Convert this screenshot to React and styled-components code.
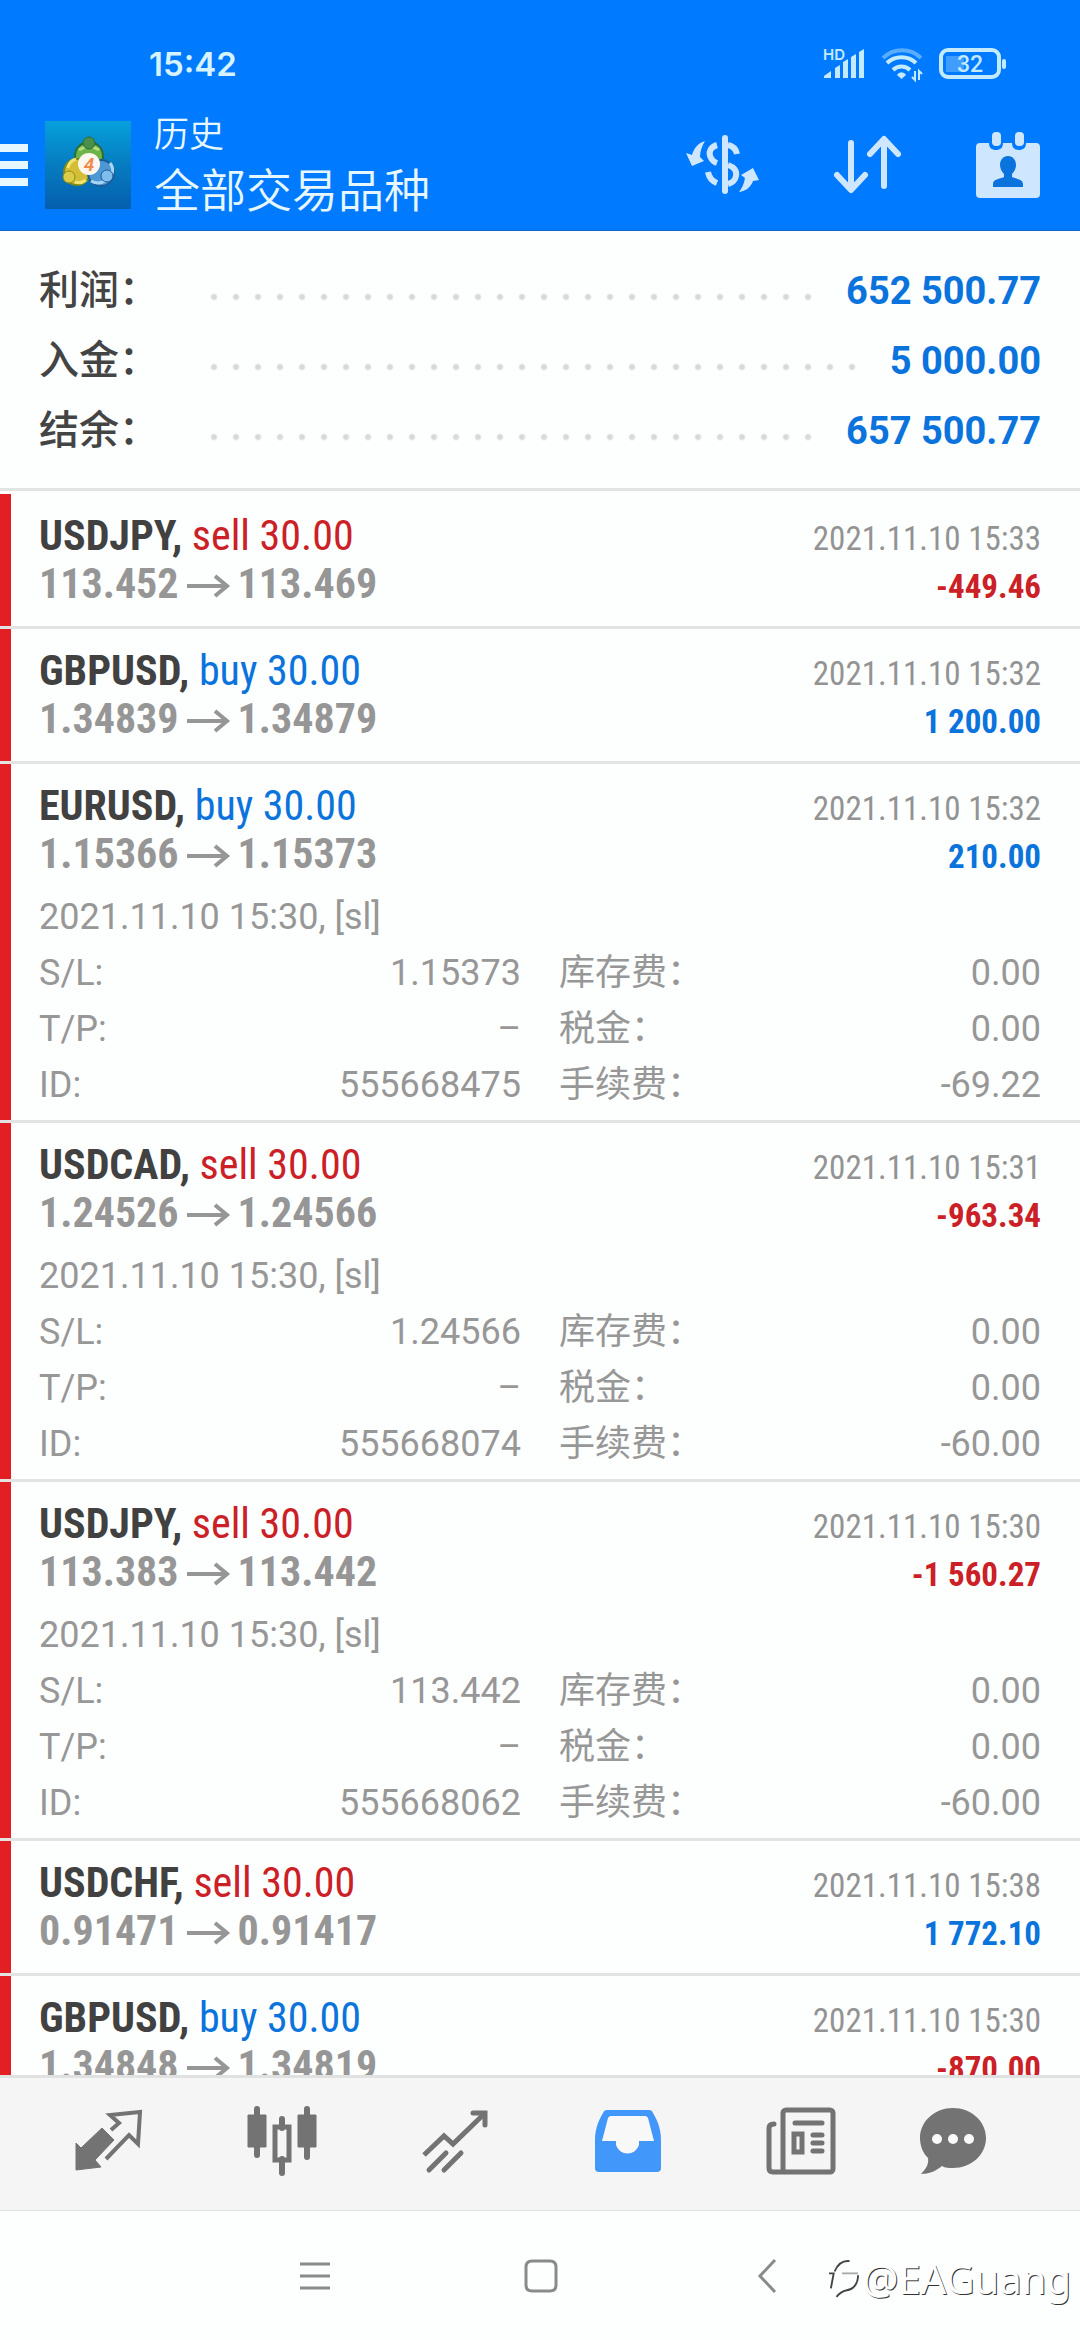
import React from "react";
import styled, { createGlobalStyle } from "styled-components";

const CJK = `"Noto Sans CJK SC", sans-serif`;
const BLUE = "#0a73dc";
const RED = "#cb2026";

const GlobalStyle = createGlobalStyle`
  * { box-sizing: border-box; }
  body { margin: 0; background: #fdfefe; font-family: Roboto, ${CJK}; }
  button { border: 0; padding: 0; background: none; font: inherit; color: inherit; }
  svg { display: block; overflow: visible; }
  h1, h2, p, dl, dt, dd, ul { margin: 0; padding: 0; font-weight: inherit; }
`;

const Screen = styled.div`
  position: relative;
  display: flex;
  flex-direction: column;
  height: 100vh;
  overflow: hidden;
`;

const TopArea = styled.header`
  flex: none;
  background: #007aff;
  border-bottom: 1px solid #1268c8;
  color: #e6f7ff;
`;

const StatusBar = styled.div`
  display: flex;
  align-items: center;
  justify-content: space-between;
  height: 86px;
  padding: 42px 73px 0 149px;
`;

const Clock = styled.time`
  font: 600 33px/44px Inter, sans-serif;
  color: #d6f3ff;
`;

const StatusIcons = styled.div`
  display: flex;
  align-items: center;
  gap: 16px;
  color: #c4eaff;
`;

const Toolbar = styled.div`
  display: flex;
  align-items: center;
  height: 144px;
  padding: 14px 40px 0 0;
`;

const MenuButton = styled.button`
  display: flex;
  flex-direction: column;
  gap: 9px;
  width: 28px;
  margin-right: 17px;
`;

const MenuLine = styled.span`
  height: 8px;
  background: #e6f7ff;
`;

const Titles = styled.div`
  flex: 1;
  padding: 0 0 8px 23px;
  font-family: ${CJK};
  font-weight: 350;
`;

const Title = styled.h1`
  font-size: 35px;
  line-height: 52px;
`;

const Subtitle = styled.p`
  font-size: 46px;
  line-height: 58px;
`;

const Actions = styled.div`
  display: flex;
  align-items: center;
  gap: 74px;
  color: #cfe6ff;
`;

const Summary = styled.dl`
  flex: none;
  padding: 21px 39px 26px;
  border-bottom: 3px solid #e2e3e3;
`;

const SummaryRow = styled.div`
  display: flex;
  align-items: baseline;
  height: 70px;
  line-height: 70px;
  font-size: 38px;
`;

const SummaryLabel = styled.dt`
  flex: 0 0 164px;
  font-family: ${CJK};
  font-size: 40px;
  font-weight: 500;
  color: #444;
`;

const Dots = styled.span`
  flex: 1;
  align-self: stretch;
  margin-right: 24px;
  background: radial-gradient(circle at 11px 45px, #d8d8d8 2px, transparent 4px) 0 0 / 22px 70px repeat-x;
`;

const SummaryValue = styled.dd`
  font-weight: 700;
  color: ${BLUE};
`;

const Deals = styled.ul`
  flex: 1;
  min-height: 0;
  overflow: hidden;
  padding-top: 3px;
  list-style: none;
`;

const Deal = styled.li`
  display: flex;
  border-bottom: 3px solid #e2e3e3;
`;

const Stripe = styled.span`
  flex: 0 0 11px;
  background: #e31f23;
`;

const DealBody = styled.div`
  flex: 1;
  padding: 18px 39px ${(p) => (p.$open ? 7 : 18)}px 28px;
`;

const Line = styled.div`
  display: flex;
  align-items: baseline;
  justify-content: space-between;
  height: 48px;
  line-height: 48px;
  font-family: "Roboto Condensed", Roboto, sans-serif;
`;

const Symbol = styled.h2`
  font-size: 42px;
  font-weight: 700;
  color: #414141;
`;

const Side = styled.span`
  font-weight: 400;
  color: ${(p) => (p.$side === "buy" ? BLUE : RED)};
`;

const When = styled.time`
  font-size: 33px;
  font-weight: 400;
  color: #939393;
`;

const Prices = styled.span`
  display: flex;
  align-items: baseline;
  gap: 8px;
  font-size: 42px;
  font-weight: 700;
  color: #969696;
`;

const PriceArrow = styled.svg`
  margin-bottom: 8px;
`;

const Profit = styled.span`
  font-size: 33px;
  font-weight: 700;
  color: ${(p) => (p.$loss ? RED : BLUE)};
`;

const Details = styled.div`
  margin-top: 11px;
  font-size: 36px;
  font-weight: 400;
  line-height: 56px;
  color: #979797;
`;

const Comment = styled.p`
  height: 56px;
`;

const Fields = styled.dl`
  display: grid;
  grid-template-columns: 1fr 1fr;
  column-gap: 38px;
`;

const Field = styled.div`
  display: flex;
  align-items: baseline;
  justify-content: space-between;
  height: 56px;
`;

const TabBar = styled.nav`
  flex: none;
  display: grid;
  grid-template-columns: repeat(5, 173fr) 132fr;
  place-items: center;
  height: 136px;
  padding: 0 61px 6px 22px;
  background: #f5f5f5;
  border-top: 3px solid #e0e1e1;
  border-bottom: 1px solid #e0e1e1;
  color: #737373;
`;

const SystemBar = styled.nav`
  flex: none;
  display: flex;
  align-items: center;
  justify-content: center;
  gap: 192px;
  height: 129px;
  padding-left: 2px;
  color: #8a8a8a;
`;

const Watermark = styled.div`
  position: absolute;
  right: 9px;
  bottom: 34px;
  display: flex;
  align-items: center;
  gap: 3px;
  font: 400 40px/54px "Noto Sans", sans-serif;
  color: #fff;
  text-shadow: 1px 1px 0 #333;
`;

const SignalIcon = () => (
  <svg width="42" height="32" viewBox="0 0 42 32" fill="currentColor" aria-hidden="true">
    <text x="0" y="12" fontFamily="Inter, sans-serif" fontSize="15" fontWeight="600">HD</text>
    <path d="M1 30v-2l7-5v7zM12 30V20l5-3v13zM20 30V14l5-3v19zM28 30V9l5-3v24zM36 30V4l5-3v29z" />
  </svg>
);

const WifiIcon = () => (
  <svg width="42" height="34" viewBox="0 0 42 34" fill="none" stroke="currentColor" strokeWidth="4" aria-hidden="true">
    <path d="M2 11a27 27 0 0 1 38 0" opacity="0.45" />
    <path d="M6 16a21 21 0 0 1 29 0M12 23a12 12 0 0 1 17 0" />
    <path d="M16 28a5 5 0 0 1 9 0l-4.500 4z" fill="currentColor" stroke="none" />
    <path d="M34 24v9l-3-3M38 33v-9l3 3" strokeWidth="2" />
  </svg>
);

const BatteryIcon = () => (
  <svg width="68" height="32" viewBox="0 0 68 32" aria-hidden="true">
    <rect x="7" y="8" width="18" height="16" fill="#3f9dff" />
    <rect x="2" y="2" width="58" height="27" rx="7" fill="none" stroke="currentColor" strokeWidth="4" />
    <rect x="63" y="11" width="4" height="10" rx="2" fill="currentColor" />
    <text x="31" y="24" textAnchor="middle" fill="currentColor" fontFamily="Roboto, sans-serif" fontSize="23" fontWeight="500">32</text>
  </svg>
);

const AppLogo = () => (
  <svg width="86" height="88" viewBox="0 0 86 88" role="img" aria-label="MetaTrader 4">
    <defs>
      <linearGradient id="sky" x1="0" y1="0" x2="0" y2="1">
        <stop offset="0" stopColor="#06a0dc" />
        <stop offset="0.5" stopColor="#067cc0" />
        <stop offset="1" stopColor="#055fae" />
      </linearGradient>
    </defs>
    <rect width="86" height="88" fill="url(#sky)" />
    <circle cx="44" cy="35" r="14" fill="#6db44b" stroke="#2c6c33" strokeWidth="2" />
    <circle cx="32" cy="51" r="13" fill="#d3bf35" stroke="#7d8a1c" strokeWidth="2" />
    <circle cx="56" cy="52" r="13" fill="#4d97d3" stroke="#1d5c99" strokeWidth="2" />
    <path d="M34 29q10-7 20 0" fill="none" stroke="#b5dc7c" strokeWidth="3" />
    <path d="M23 47q1-7 8-9M30 61q6 2 11-2" fill="none" stroke="#f1e470" strokeWidth="3" />
    <path d="M46 60q7 4 14 0M65 42q4 5 2 11" fill="none" stroke="#a7d4f3" strokeWidth="3" />
    <circle cx="44" cy="22" r="6" fill="#4a8f4b" stroke="#2c6c33" />
    <circle cx="24" cy="56" r="6" fill="#dccb45" stroke="#8c8a1c" />
    <circle cx="62" cy="55" r="6" fill="#7fbdec" stroke="#1d5c99" />
    <circle cx="44" cy="43" r="11" fill="#fdf6ee" />
    <text x="44" y="50" textAnchor="middle" fill="#ee8a48" fontFamily="Roboto, sans-serif" fontSize="19" fontWeight="600" fontStyle="italic">4</text>
  </svg>
);

const CurrencyIcon = () => (
  <svg width="74" height="58" viewBox="0 0 74 58" fill="none" stroke="currentColor" strokeWidth="6" aria-hidden="true">
    <path d="M39 2v53" strokeLinecap="round" />
    <path d="M31 9c-7 2-9 8-6 13 1 2 3 4 6 5M42 9c5 1 8 4 9 9M42 29c6 2 9 6 8 11-1 5-4 7-8 8M22 36c1 6 4 9 9 11" />
    <path d="M6 30l12-5-4-4c0-6 2-11 5-16C12 7 8 12 6 19l-6-2zM67 32l-12 7 4 3c-1 6-3 10-6 14 7-1 12-5 14-11l6-1z" fill="currentColor" stroke="none" />
  </svg>
);

const SortIcon = () => (
  <svg width="68" height="60" viewBox="0 0 68 60" fill="none" stroke="currentColor" strokeWidth="6" strokeLinecap="round" strokeLinejoin="round" aria-hidden="true">
    <path d="M17 8v46M3 40l14 15 14-15M50 51V5M36 19L50 4l14 15" />
  </svg>
);

const ContactIcon = () => (
  <svg width="64" height="66" viewBox="0 0 64 66" fill="currentColor" aria-hidden="true">
    <path d="M4 11h9c0 5 3 7 7 7s7-2 7-7h9c0 5 3 7 7 7s7-2 7-7h10q4 0 4 4v47q0 4-4 4H4q-4 0-4-4V15q0-4 4-4z" />
    <rect x="16" y="0" width="9" height="14" rx="4" />
    <rect x="39" y="0" width="9" height="14" rx="4" />
    <path d="M32 24c5 0 8 4 8 9 0 4-2 7-4 9v3c4 2 11 2 11 7v3H17v-3c0-5 7-5 11-7v-3c-2-2-4-5-4-9 0-5 3-9 8-9z" fill="#0a73dc" />
  </svg>
);

const QuotesIcon = () => (
  <svg width="68" height="62" viewBox="0 0 68 62" aria-hidden="true">
    <path d="M1 33l5 5 21-20 12 12-19 20 6 7-25 3z" fill="currentColor" stroke="currentColor" strokeLinejoin="round" />
    <path d="M36 20l8-7-9-8 30-3-2 32-9-9-23 24" fill="none" stroke="currentColor" strokeWidth="4" />
  </svg>
);

const CandlesIcon = () => (
  <svg width="70" height="70" viewBox="0 0 70 70" fill="none" stroke="currentColor" aria-hidden="true">
    <path d="M10 3v46M60 3v48M35 13v9M35 53v14" strokeWidth="6" strokeLinecap="round" />
    <path d="M1 9h18v32H1zM51 9h18v32H51z" fill="currentColor" stroke="currentColor" strokeWidth="1" />
    <rect x="28" y="21" width="14" height="33" strokeWidth="5" />
  </svg>
);

const ChartIcon = () => (
  <svg width="68" height="64" viewBox="0 0 68 64" fill="none" stroke="currentColor" strokeWidth="5" strokeLinecap="round" aria-hidden="true">
    <path d="M3 46l20-19 9 8L63 5" strokeLinecap="butt" />
    <path d="M52 4h12v12M8 61l17-17M23 61l17-17" />
  </svg>
);

const InboxIcon = () => (
  <svg width="66" height="62" viewBox="0 0 66 62" aria-hidden="true">
    <path d="M12 0h42q3 0 4 3c6 10 8 18 8 28v27q0 4-4 4H4q-4 0-4-4V31C0 21 2 13 8 3q1-3 4-3z" fill="#4297fb" />
    <path d="M16 6h34q2 0 3 2l6 23H44v4a12 12 0 0 1-23 0v-4H7l6-23q1-2 3-2z" fill="#f8f8f8" />
  </svg>
);

const NewsIcon = () => (
  <svg width="70" height="68" viewBox="0 0 70 68" fill="none" stroke="currentColor" strokeWidth="5" strokeLinecap="round" aria-hidden="true">
    <rect x="17" y="3" width="50" height="62" rx="3" />
    <path d="M18 65H7q-4 0-4-4V21q0-4 5-4M29 16h27M47 28h9M47 36h9M47 44h9" />
    <rect x="28" y="27" width="8" height="18" />
  </svg>
);

const ChatIcon = () => (
  <svg width="66" height="68" viewBox="0 0 66 68" fill="currentColor" aria-hidden="true">
    <path d="M33 1c18 0 33 13 33 30S51 61 33 61c-4 0-8 0-11-2-6 5-13 8-21 8 5-5 8-10 7-16-5-5-8-12-8-20C0 14 15 1 33 1z" />
    <g fill="#fafafa"><circle cx="17" cy="32" r="5" /><circle cx="33" cy="32" r="5" /><circle cx="49" cy="32" r="5" /></g>
  </svg>
);

const SysIcon = ({ d }) => (
  <svg width="34" height="34" viewBox="0 0 34 34" fill="none" stroke="currentColor" strokeWidth="3" aria-hidden="true">
    <path d={d} />
  </svg>
);

const ArrowIcon = () => (
  <PriceArrow width="43" height="24" viewBox="0 0 43 24" fill="none" stroke="currentColor" strokeWidth="4" role="img" aria-label="to">
    <path d="M0 12h40M28 2l12 10-12 10" />
  </PriceArrow>
);

const MarkIcon = () => (
  <svg width="30" height="42" viewBox="0 0 32 42" fill="none" stroke="#444" strokeWidth="2" aria-hidden="true">
    <path d="M0 15h5l-3 16M6 13C9 6 14 1 22 2M31 17c0 9-5 15-12 16-5 1-8 3-11 7" />
    <path d="M14 15h17" stroke="#aaa" />
  </svg>
);

const totals = [
  ["利润：", "652 500.77"],
  ["入金：", "5 000.00"],
  ["结余：", "657 500.77"],
];

const deals = [
  { symbol: "USDJPY", side: "sell", from: "113.452", to: "113.469", time: "15:33", profit: "-449.46" },
  { symbol: "GBPUSD", side: "buy", from: "1.34839", to: "1.34879", time: "15:32", profit: "1 200.00" },
  { symbol: "EURUSD", side: "buy", from: "1.15366", to: "1.15373", time: "15:32", profit: "210.00", id: "555668475", fee: "-69.22" },
  { symbol: "USDCAD", side: "sell", from: "1.24526", to: "1.24566", time: "15:31", profit: "-963.34", id: "555668074", fee: "-60.00" },
  { symbol: "USDJPY", side: "sell", from: "113.383", to: "113.442", time: "15:30", profit: "-1 560.27", id: "555668062", fee: "-60.00" },
  { symbol: "USDCHF", side: "sell", from: "0.91471", to: "0.91417", time: "15:38", profit: "1 772.10" },
  { symbol: "GBPUSD", side: "buy", from: "1.34848", to: "1.34819", time: "15:30", profit: "-870.00" },
];

const tabs = [
  ["行情", QuotesIcon],
  ["图表", CandlesIcon],
  ["交易", ChartIcon],
  ["历史", InboxIcon],
  ["新闻", NewsIcon],
  ["消息", ChatIcon],
];

function DealItem({ deal }) {
  const fields = [
    ["S/L:", deal.to],
    ["库存费：", "0.00"],
    ["T/P:", "–"],
    ["税金：", "0.00"],
    ["ID:", deal.id],
    ["手续费：", deal.fee],
  ];
  return (
    <Deal>
      <Stripe />
      <DealBody $open={Boolean(deal.id)}>
        <Line>
          <Symbol>{deal.symbol}, <Side $side={deal.side}>{deal.side} 30.00</Side></Symbol>
          <When>2021.11.10 {deal.time}</When>
        </Line>
        <Line>
          <Prices>{deal.from}<ArrowIcon />{deal.to}</Prices>
          <Profit $loss={deal.profit.startsWith("-")}>{deal.profit}</Profit>
        </Line>
        {deal.id && (
          <Details>
            <Comment>2021.11.10 15:30, [sl]</Comment>
            <Fields>
              {fields.map(([label, value]) => (
                <Field key={label}><dt>{label}</dt><dd>{value}</dd></Field>
              ))}
            </Fields>
          </Details>
        )}
      </DealBody>
    </Deal>
  );
}

export default function App() {
  return (
    <Screen>
      <GlobalStyle />
      <TopArea>
        <StatusBar>
          <Clock>15:42</Clock>
          <StatusIcons><SignalIcon /><WifiIcon /><BatteryIcon /></StatusIcons>
        </StatusBar>
        <Toolbar>
          <MenuButton aria-label="菜单"><MenuLine /><MenuLine /><MenuLine /></MenuButton>
          <AppLogo />
          <Titles>
            <Title>历史</Title>
            <Subtitle>全部交易品种</Subtitle>
          </Titles>
          <Actions>
            <button aria-label="品种"><CurrencyIcon /></button>
            <button aria-label="排序"><SortIcon /></button>
            <button aria-label="日期"><ContactIcon /></button>
          </Actions>
        </Toolbar>
      </TopArea>
      <Summary>
        {totals.map(([label, value]) => (
          <SummaryRow key={label}>
            <SummaryLabel>{label}</SummaryLabel>
            <Dots />
            <SummaryValue>{value}</SummaryValue>
          </SummaryRow>
        ))}
      </Summary>
      <Deals>
        {deals.map((deal) => <DealItem key={deal.symbol + deal.from} deal={deal} />)}
      </Deals>
      <TabBar>
        {tabs.map(([label, Icon]) => (
          <button key={label} aria-label={label}><Icon /></button>
        ))}
      </TabBar>
      <SystemBar>
        <button aria-label="最近任务"><SysIcon d="M2 5h30M2 17h30M2 29h30" /></button>
        <button aria-label="主屏幕"><SysIcon d="M8 2h18q6 0 6 6v18q0 6-6 6H8q-6 0-6-6V8q0-6 6-6z" /></button>
        <button aria-label="返回"><SysIcon d="M25 1L10 17l15 16" /></button>
      </SystemBar>
      <Watermark><MarkIcon />@EAGuang</Watermark>
    </Screen>
  );
}
